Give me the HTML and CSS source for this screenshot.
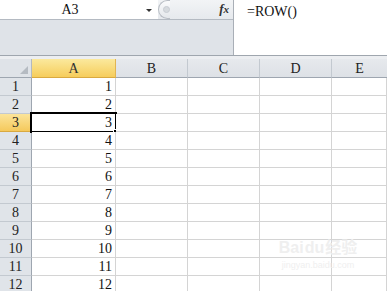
FILE: index.html
```html
<!DOCTYPE html>
<html>
<head>
<meta charset="utf-8">
<link rel="stylesheet" href="styles.css">
</head>
<body>
<div class="toolbar">
  <div class="left">
    <div class="namerow">
      <div class="namebox">
        <span class="ref">A3</span>
        <span class="drop"></span>
      </div>
      <div class="fxpane">
        <span class="grip"><span class="dot"></span></span>
        <span class="fx">f<i>x</i></span>
      </div>
    </div>
    <div class="ribbonfill"></div>
  </div>
  <div class="formula">=ROW()</div>
</div>
<div class="gap"></div>
<div class="sheet">
  <div class="corner"><span class="tri"></span></div>
  <div class="colh sel">A</div>
  <div class="colh">B</div>
  <div class="colh">C</div>
  <div class="colh">D</div>
  <div class="colh last">E</div>

  <div class="rowh">1</div><div class="cell num">1</div><div class="cell"></div><div class="cell"></div><div class="cell"></div><div class="cell"></div>
  <div class="rowh">2</div><div class="cell num">2</div><div class="cell"></div><div class="cell"></div><div class="cell"></div><div class="cell"></div>
  <div class="rowh sel">3</div><div class="cell num active">3<span class="box"></span><span class="handle"></span></div><div class="cell"></div><div class="cell"></div><div class="cell"></div><div class="cell"></div>
  <div class="rowh">4</div><div class="cell num">4</div><div class="cell"></div><div class="cell"></div><div class="cell"></div><div class="cell"></div>
  <div class="rowh">5</div><div class="cell num">5</div><div class="cell"></div><div class="cell"></div><div class="cell"></div><div class="cell"></div>
  <div class="rowh">6</div><div class="cell num">6</div><div class="cell"></div><div class="cell"></div><div class="cell"></div><div class="cell"></div>
  <div class="rowh">7</div><div class="cell num">7</div><div class="cell"></div><div class="cell"></div><div class="cell"></div><div class="cell"></div>
  <div class="rowh">8</div><div class="cell num">8</div><div class="cell"></div><div class="cell"></div><div class="cell"></div><div class="cell"></div>
  <div class="rowh">9</div><div class="cell num">9</div><div class="cell"></div><div class="cell"></div><div class="cell"></div><div class="cell"></div>
  <div class="rowh">10</div><div class="cell num">10</div><div class="cell"></div><div class="cell"></div><div class="cell"></div><div class="cell"></div>
  <div class="rowh">11</div><div class="cell num">11</div><div class="cell"></div><div class="cell"></div><div class="cell"></div><div class="cell"></div>
  <div class="rowh">12</div><div class="cell num">12</div><div class="cell"></div><div class="cell"></div><div class="cell"></div><div class="cell"></div>

  <div class="watermark">
    <div class="wm1">Bai<span class="paw">du</span>经验</div>
    <div class="wm2">jingyan.baidu.com</div>
  </div>
</div>
</body>
</html>
```

FILE: styles.css
```css
* { box-sizing: border-box; }
html, body { margin: 0; padding: 0; }
body {
  width: 387px;
  height: 291px;
  overflow: hidden;
  background: #ffffff;
  font-family: "Liberation Serif", "Noto Sans CJK SC", serif;
  color: #111;
}

.toolbar {
  display: flex;
  height: 56px;
  border-bottom: 1px solid #9fa6ae;
}
.left {
  width: 233px;
  display: flex;
  flex-direction: column;
}
.namerow {
  height: 20px;
  display: flex;
  border-bottom: 1px solid #b4bac2;
}
.namebox {
  width: 158px;
  background: #fff;
  position: relative;
  display: flex;
  align-items: center;
  justify-content: center;
  padding-right: 18px;
}
.ref {
  font-size: 14px;
  color: #111;
  padding-top: 1px;
}
.drop {
  position: absolute;
  left: 146px;
  top: 9px;
  width: 0;
  height: 0;
  border-left: 3px solid transparent;
  border-right: 3px solid transparent;
  border-top: 3px solid #333;
}
.fxpane {
  flex: 1;
  background: linear-gradient(#f2f4f6, #e6e9ed);
  position: relative;
  display: flex;
  align-items: center;
  justify-content: flex-end;
  padding-right: 4px;
}
.grip {
  position: absolute;
  left: 0;
  top: 0;
  width: 12px;
  height: 19px;
  border: 1px solid #b8bdc4;
  border-right: none;
  border-radius: 10px 0 0 10px;
  background: linear-gradient(#fafbfc, #e4e7eb);
}
.dot {
  position: absolute;
  left: 4px;
  top: 5px;
  width: 7px;
  height: 7px;
  border-radius: 50%;
  background: #d6dade;
  border: 1px solid #c7ccd2;
}
.fx {
  font-family: "Liberation Serif", serif;
  font-style: italic;
  font-weight: bold;
  font-size: 13px;
  color: #333;
  margin-top: -1px;
}
.fx i { font-size: 11px; }
.ribbonfill {
  flex: 1;
  background: #dfe3e8;
}
.formula {
  flex: 1;
  background: #fff;
  border-left: 1px solid #a9afb7;
  padding: 4px 0 0 13px;
  font-size: 14px;
  color: #111;
}
.gap {
  height: 3px;
  background: #eceef1;
}

.sheet {
  position: relative;
  display: grid;
  grid-template-columns: 32px 84px 72px 72px 72px 1fr;
  grid-template-rows: 19px repeat(12, 18px);
}
.corner {
  position: relative;
  background: #dfe3e8;
  border-right: 1px solid #b3b9c1;
  border-bottom: 1px solid #9ea6b0;
}
.tri {
  position: absolute;
  right: 3px;
  bottom: 3px;
  width: 0;
  height: 0;
  border-left: 8px solid transparent;
  border-bottom: 8px solid #b5bbc2;
}
.colh {
  background: linear-gradient(#e6e9ed, #dde1e6);
  border-right: 1px solid #c3c9d0;
  border-bottom: 1px solid #9ea6b0;
  display: flex;
  align-items: center;
  justify-content: center;
  font-size: 14px;
  color: #222;
  padding-top: 1px;
}
.colh.sel {
  background: linear-gradient(#fbe99d, #f6cd5c);
  border-right: 1px solid #e2b552;
  border-bottom: 1px solid #d9a940;
  color: #333;
}
.colh.last { border-right: none; }
.rowh {
  background: #e0e4e9;
  border-right: 1px solid #9ea6b0;
  border-bottom: 1px solid #c3c9d0;
  display: flex;
  align-items: center;
  justify-content: center;
  font-size: 14px;
  color: #222;
  padding-top: 1px;
}
.rowh.sel {
  background: linear-gradient(#fbe49a, #f5c95c);
  border-bottom: 1px solid #d9a940;
  border-right: 1px solid #d9a940;
}
.cell {
  position: relative;
  border-right: 1px solid #d4d4d4;
  border-bottom: 1px solid #d4d4d4;
  background: #fff;
}
.num {
  display: flex;
  align-items: center;
  justify-content: flex-end;
  padding-right: 3px;
  padding-top: 1px;
  font-size: 14px;
  color: #111;
}
.box {
  position: absolute;
  left: -2px;
  top: -2px;
  right: -2px;
  bottom: -2px;
  border: 2px solid #000;
}
.handle {
  position: absolute;
  right: -4px;
  bottom: -4px;
  width: 6px;
  height: 6px;
  background: #000;
  border: 1px solid #fff;
}
.watermark {
  position: absolute;
  left: 268px;
  top: 175px;
  width: 100px;
  color: #efefef;
  font-family: "Liberation Sans", "Noto Sans CJK SC", sans-serif;
  text-align: center;
}
.wm1 {
  font-size: 16px;
  font-weight: bold;
}
.paw { margin: 0 1px; }
.wm2 {
  font-size: 9px;
  margin-top: 2px;
}
```
